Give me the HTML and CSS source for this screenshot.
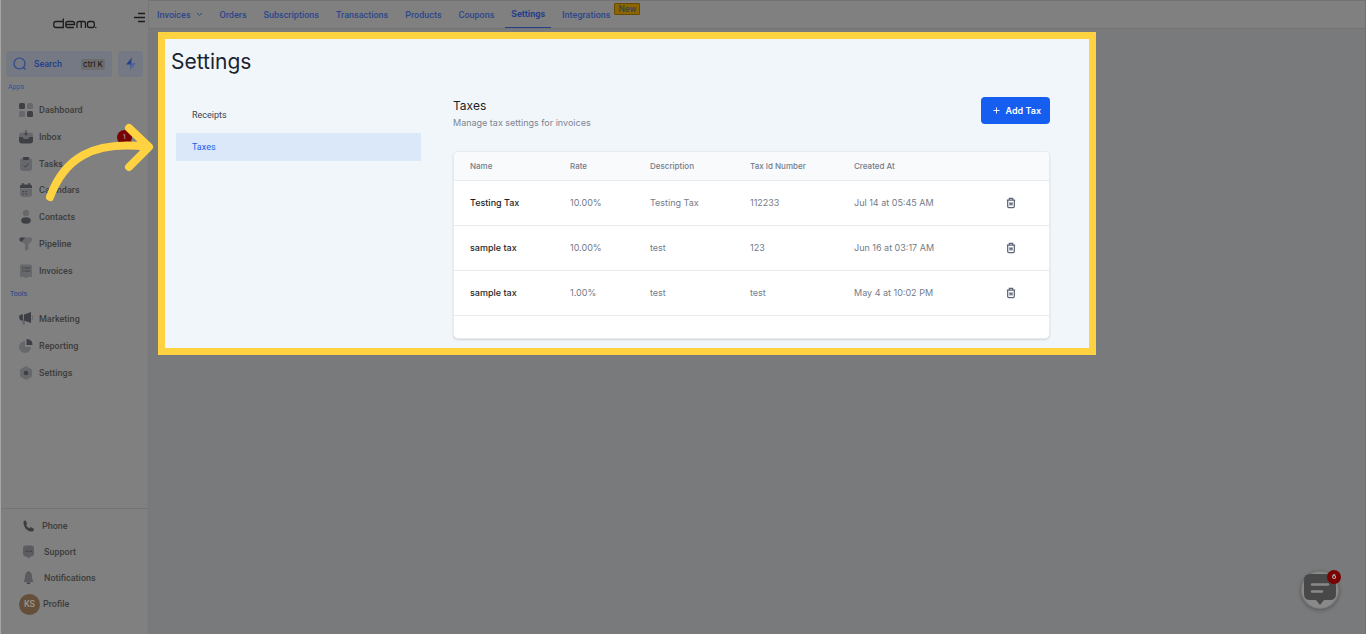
FILE: index.html
```html
<!DOCTYPE html>
<html lang="en">
<head>
<meta charset="utf-8">
<title>Settings - Taxes</title>
<link rel="stylesheet" href="styles.css">
</head>
<body>
<svg class="defs" aria-hidden="true">
  <symbol id="trash" viewBox="0 0 12 14"><path d="M1 3.500h10M4 3V1.500h4V3M2 3.500v7.500q0 1.500 1.500 1.500h5q1.500 0 1.500-1.500V3.500M4.800 6v4M7.200 6v4M4.800 8h2.400" fill="none" stroke="currentColor" stroke-width="1.500"/></symbol>
</svg>
<div class="app">
  <aside class="sidebar">
    <div class="brand">
      <svg class="logo" viewBox="0 0 44 12" role="img" aria-label="demo">
        <g fill="none" stroke="#1c1c1c" stroke-width="1.300">
          <path d="M10.300 .5v9H3q-2.200 0-2.200-2V5.500q0-2 2.200-2h7.300"/>
          <path d="M13 6.500h8.500V5.500q0-2-2.200-2h-4.300q-2.200 0-2.200 2v2q0 2 2.200 2h6"/>
          <path d="M24 10V5.500q0-2 2-2h4.500q2 0 2 2V10M28.200 3.500V10"/>
          <rect x="34.500" y="3.500" width="6.800" height="6" rx="2"/>
        </g>
        <circle cx="42.800" cy="9.500" r=".7" fill="#1c1c1c"/>
      </svg>
      <button class="collapse" aria-label="Collapse menu">
        <svg viewBox="0 0 12 11"><path d="M4 1.500h7M0 5.500h11M4 9.500h7" stroke="#1c1c1c" stroke-width="1.500"/></svg>
      </button>
    </div>
    <div class="search-row">
      <button class="search">
        <svg viewBox="0 0 14 14"><circle cx="6.500" cy="6.500" r="5.500" fill="none" stroke="#2d478d" stroke-width="1.200"/><path d="M10.500 10.500l2 2" stroke="#2d478d" stroke-width="1.200"/></svg>
        <span>Search</span><kbd>ctrl K</kbd>
      </button>
      <button class="bolt" aria-label="Quick actions">
        <svg viewBox="0 0 12 14"><path d="M7 .5L1 7.500h4V13z" fill="#253f8b"/><path d="M7 1v5h4L5.500 13V8z" fill="#526598"/></svg>
      </button>
    </div>
    <h2 class="group">Apps</h2>
    <ul class="menu apps">
      <li><a href="#"><svg viewBox="0 0 14 14"><rect width="6" height="6" rx="1.500" class="dk"/><rect x="8" width="6" height="6" rx="1.500" class="lt"/><rect y="8" width="6" height="6" rx="1.500" class="lt"/><rect x="8" y="8" width="6" height="6" rx="1.500" class="dk"/></svg>Dashboard</a></li>
      <li><a href="#"><svg viewBox="0 0 14 14"><rect y="2.500" width="14" height="9" rx="3" class="lt"/><path d="M0 7h3.500l1.500 2h4l1.500-2H14v3.500q0 3-3 3H3q-3 0-3-3z" class="dk"/><path d="M6.500 0h1v3.500H9l-2 2.200-2-2.200h1.500z" class="dk"/></svg>Inbox<span class="badge">1</span></a></li>
      <li><a href="#"><svg viewBox="0 0 14 14"><rect x="1" y="1" width="12" height="13" rx="3" class="lt"/><rect x="4" width="6" height="3" rx="1" class="dk"/><path d="M4.500 8.500l2 1.500 3-3.500" fill="none" stroke="#3e4046"/></svg>Tasks</a></li>
      <li><a href="#"><svg viewBox="0 0 14 14"><path d="M1 5.500h12V11q0 3-3 3H4q-3 0-3-3z" class="lt"/><path d="M1 5V3.500Q1 1.500 3 1.500V0h1.500v1.500h5V0H11v1.500q2 0 2 2V5z" class="dk"/><path d="M3.500 8.500H5M6.500 8.500H8M3.500 11H5M6.500 11H8" stroke="#3e4046"/></svg>Calendars</a></li>
      <li><a href="#"><svg viewBox="0 0 14 14"><circle cx="7" cy="3" r="3.200" class="lt"/><ellipse cx="7" cy="10.500" rx="4.800" ry="3.300" class="dk"/></svg>Contacts</a></li>
      <li><a href="#"><svg viewBox="0 0 14 14"><path d="M2 .5h10q1.500.5 1 2.500-.5 2-3.500 4V12q-1.500 2-3.500 1.500V7.500L2 4z" class="lt"/><path d="M1.500 .5H6L2.500 5Q0 4 .5 1.500z" class="dk"/></svg>Pipeline</a></li>
      <li><a href="#"><svg viewBox="0 0 14 14"><path d="M1 2q0-1.500 1.500-1.500h9Q13 .5 13 2v11.500l-2-1-2 1-2 .5-2-.5-2-1-2 1z" class="lt"/><path d="M3 4h1.500M5.500 4H11M3 7h1.500M5.500 7H11" stroke="#3e4046"/></svg>Invoices</a></li>
    </ul>
    <h2 class="group tools-title">Tools</h2>
    <ul class="menu tools">
      <li><a href="#"><svg viewBox="0 0 14 14"><path d="M3 7h3v5q-1 2-2.500 0z" class="lt"/><path d="M0 5q0-2 2-2.500h2v6H2Q0 8 0 5zM5 2.500L12 0v11L5 8.500z" class="dk"/><path d="M13 3q1 2 0 5" fill="none" stroke="#67686b"/></svg>Marketing</a></li>
      <li><a href="#"><svg viewBox="0 0 14 14"><path d="M6 2v6h6a6 6 0 1 1-6-6z" class="lt"/><path d="M7.500 0q6 0 6 6h-6z" class="dk"/></svg>Reporting</a></li>
      <li><a href="#"><svg viewBox="0 0 14 14"><path d="M7 0l6 3.500v7L7 14l-6-3.500v-7z" class="lt"/><circle cx="7" cy="7" r="2.300" class="dk"/></svg>Settings</a></li>
    </ul>
    <ul class="menu footer">
      <li><a href="#"><svg viewBox="0 0 14 14"><path d="M4.500 1.500L6.200 4.800 5.200 6q1 2.200 3.200 3.200l1.200-1.200 3.300 1.700q.3 2.800-2.500 2.800Q7 12.500 4.500 9.500T2.500 2.500Q3 1 4.500 1.500z" fill="#3e3e3e"/></svg>Phone</a></li>
      <li class="wide"><a href="#"><svg viewBox="0 0 14 14"><path d="M5 .5h5q3 0 3 3v5q0 3-3 3H9.500l-2 2-2-2H5q-3 0-3-3v-5q0-3 3-3z" fill="#5b5c5f"/><path d="M4.500 6.300H6M7 6.300h1.500M9.500 6.300H11" stroke="#3e4046" stroke-width="1.200"/></svg>Support</a></li>
      <li class="wide"><a href="#"><svg viewBox="0 0 14 14"><path d="M7.500 1q3.500 0 3.500 4v2l1.500 4h-10L4 7V5q0-4 3.500-4z" fill="#5b5c5f"/><path d="M6 1.500Q7.500-.5 9 1.500zM5 11.500h5Q7.500 15 5 11.500z" class="dk"/></svg>Notifications</a></li>
      <li class="profile"><a href="#"><span class="avatar">KS</span>Profile</a></li>
    </ul>
  </aside>

  <div class="content">
    <nav class="topbar">
      <a href="#">Invoices <svg viewBox="0 0 7 5"><path d="M1 1l2.500 2.500L6 1" fill="none" stroke="currentColor"/></svg></a>
      <a href="#">Orders</a>
      <a href="#">Subscriptions</a>
      <a href="#">Transactions</a>
      <a href="#">Products</a>
      <a href="#">Coupons</a>
      <a href="#" class="active">Settings</a>
      <a href="#">Integrations<span class="new">New</span></a>
    </nav>
    <main class="spotlight">
      <h1>Settings</h1>
      <div class="columns">
        <nav class="subnav">
          <a href="#">Receipts</a>
          <a href="#" class="current">Taxes</a>
        </nav>
        <section class="taxes">
          <header>
            <div>
              <h2>Taxes</h2>
              <p>Manage tax settings for invoices</p>
            </div>
            <button class="add"><svg viewBox="0 0 8 8"><path d="M4 .5v7M.5 4h7" stroke="currentColor"/></svg>Add Tax</button>
          </header>
          <div class="card">
            <table>
              <colgroup><col class="c-name"><col class="c-rate"><col class="c-desc"><col class="c-id"><col class="c-date"><col></colgroup>
              <thead><tr><th>Name</th><th>Rate</th><th>Description</th><th>Tax Id Number</th><th>Created At</th><td></td></tr></thead>
              <tbody>
                <tr><td>Testing Tax</td><td>10.00%</td><td>Testing Tax</td><td>112233</td><td>Jul 14 at 05:45 AM</td><td><button aria-label="Delete"><svg><use href="#trash"/></svg></button></td></tr>
                <tr><td>sample tax</td><td>10.00%</td><td>test</td><td>123</td><td>Jun 16 at 03:17 AM</td><td><button aria-label="Delete"><svg><use href="#trash"/></svg></button></td></tr>
                <tr><td>sample tax</td><td>1.00%</td><td>test</td><td>test</td><td>May 4 at 10:02 PM</td><td><button aria-label="Delete"><svg><use href="#trash"/></svg></button></td></tr>
              </tbody>
            </table>
          </div>
        </section>
      </div>
    </main>
  </div>
</div>
<svg class="arrow" viewBox="0 0 120 90" aria-hidden="true"><path d="M10 77C24 39 52 20 108 27M89 8l20 19-20 20" fill="none" stroke="#ffd242" stroke-width="8" stroke-linecap="round" stroke-linejoin="round"/></svg>
<button class="chat" aria-label="Open chat">
  <svg viewBox="0 0 38 38"><circle cx="19" cy="19" r="18" fill="#898989"/><path d="M9 3h20q6 0 6 6v14q0 6-6 6h-6l-4 5-4-5H9q-6 0-6-6V9q0-6 6-6z" fill="#484848"/><path d="M11 13.500h16M11 20.500h10" stroke="#898989" stroke-width="2.500" stroke-linecap="round"/></svg>
  <span>6</span>
</button>
</body>
</html>
```
FILE: styles.css
```css
* { box-sizing: border-box; }
body { margin: 0; background: #797a7b; font-family: Roboto, sans-serif; font-size: 9px; line-height: 12px; }
h1, h2, p, ul { margin: 0; padding: 0; font-weight: 400; }
ul { list-style: none; }
a { color: inherit; text-decoration: none; }
button { border: 0; padding: 0; background: none; font: inherit; color: inherit; }
svg { display: block; }
.defs { position: absolute; width: 0; height: 0; }
.app { display: flex; min-height: 100vh; border-right: 1px solid #707070; }

.sidebar { flex: 0 0 149px; display: flex; flex-direction: column; background: #808080; border-left: 1px solid #a6a6a6; border-right: 1px solid #777; }
.brand { display: flex; justify-content: space-between; padding: 12px 2px 0 52px; height: 51px; }
.logo { width: 44px; height: 12px; margin-top: 6px; }
.collapse { align-self: flex-start; }
.collapse svg { width: 12px; height: 11px; }
.search-row { display: flex; gap: 6px; padding: 0 5px; height: 26px; }
.search { flex: 1; display: flex; align-items: center; padding: 0 7px; background: #747983; border-radius: 3px; color: #253f8b; font-weight: 500; }
.search svg { width: 14px; height: 14px; }
.search span { margin-left: 7px; }
.search kbd { margin-left: auto; padding: 0 2px; background: #6c6c6c; border-radius: 2px; color: #111; font: 8px/11px Inter, sans-serif; }
.bolt { width: 25px; display: grid; place-items: center; background: #747983; border-radius: 3px; }
.bolt svg { width: 12px; height: 14px; }
.group { padding: 4px 7px; font-size: 7px; line-height: 12px; color: #3450a0; }
.menu li { display: grid; align-items: center; }
.menu a { display: flex; align-items: center; gap: 6px; padding: 0 16px 0 18px; color: #3c3c3c; font-weight: 500; }
.menu svg { width: 14px; height: 14px; }
.apps, .tools { display: grid; grid-auto-rows: 1fr; }
.apps { height: 187px; }
.tools { height: 80px; margin-top: 2px; }
.tools-title { padding: 4px 9px; color: #253f8b; }
.dk { fill: #3e4046; }
.lt { fill: #67686b; }
.badge { display: grid; place-items: center; width: 15px; height: 15px; margin-left: auto; background: #790000; border-radius: 50%; color: #999; font-size: 7px; }
.footer { margin-top: auto; height: 126px; padding-top: 4px; border-top: 1px solid #737373; }
.footer li { height: 26px; }
.footer a { gap: 7px; padding-left: 20px; }
.footer .wide a { gap: 9px; }
.footer .profile a { gap: 3px; padding-left: 18px; }
.avatar { display: grid; place-items: center; width: 21px; height: 21px; border-radius: 50%; background: #64503a; color: #9b958e; }

.content { flex: 1; min-width: 0; }
.topbar { display: flex; gap: 17px; height: 29px; padding: 0 8px; background: #808080; border-top: 1px solid #737373; border-bottom: 1px solid #737373; color: #2d478d; font-weight: 500; }
.topbar a { display: flex; align-items: center; }
.topbar svg { width: 7px; height: 5px; margin-left: 5px; }
.topbar .active { margin: 0 -6px; padding: 0 6px; border-bottom: 1px solid #253f8b; color: #253f8b; font-weight: 700; }
.new { align-self: flex-start; margin: 2px 0 0 4px; padding: 0 3px; background: #8a6500; border: 1px solid #694b00; border-radius: 1px; color: #3c4350; line-height: 10px; }

.spotlight { margin: 3px 269px 0 9px; padding: 10px 39px 9px 6px; border: 7px solid #ffd242; background: #f1f6fa; font-family: Inter, sans-serif; }
.spotlight h1 { font-size: 21px; line-height: 26px; color: #1b2330; }
.columns { display: flex; gap: 32px; padding: 22px 0 0 5px; }
.subnav { flex: 0 0 245px; display: grid; align-content: start; gap: 4px; padding-top: 4px; font-family: Roboto, sans-serif; line-height: 28px; color: #3a4354; }
.subnav a { padding: 0 16px; }
.subnav .current { background: #dbe8f9; color: #155eef; }
.taxes { flex: 1; min-width: 0; }
.taxes header { display: flex; justify-content: space-between; align-items: flex-start; height: 54px; }
.taxes h2 { font-size: 12px; line-height: 18px; color: #1b1f27; }
.taxes p { line-height: 16px; color: #7c8594; }
.add { display: flex; align-items: center; gap: 6px; height: 27px; padding: 0 9px 0 12px; background: #155eef; border-radius: 4px; color: #fff; font-weight: 600; }
.add svg { width: 7px; height: 7px; }
.card { padding-bottom: 22px; background: #fff; border: 1px solid #e8ebee; border-radius: 5px; box-shadow: 0 1px 2px #0002; overflow: hidden; }
table { width: 100%; table-layout: fixed; border-collapse: collapse; color: #727c8b; }
th, td { height: 45px; padding: 0 0 0 16px; text-align: left; border-bottom: 1px solid #e9ebee; }
thead th, thead td { height: 28px; background: #f9fafb; font-size: 8px; font-weight: 500; }
tbody td:first-child { color: #1b1f27; font-weight: 500; }
.c-name { width: 100px; }
.c-rate { width: 80px; }
.c-desc { width: 100px; }
.c-id { width: 104px; }
.c-date { width: 152px; }
td button { display: block; color: #5d6676; }
td svg { width: 10px; height: 12px; }

.arrow { position: absolute; left: 40px; top: 120px; width: 120px; height: 90px; }
.chat { position: fixed; right: 27px; bottom: 25px; border-radius: 50%; box-shadow: 0 1px 4px #0005; }
.chat svg { width: 38px; height: 38px; }
.chat span { position: absolute; top: -1px; right: -2px; width: 14px; height: 14px; border-radius: 50%; background: #790000; color: #aaa; font-size: 8px; line-height: 14px; font-weight: 700; }
```
